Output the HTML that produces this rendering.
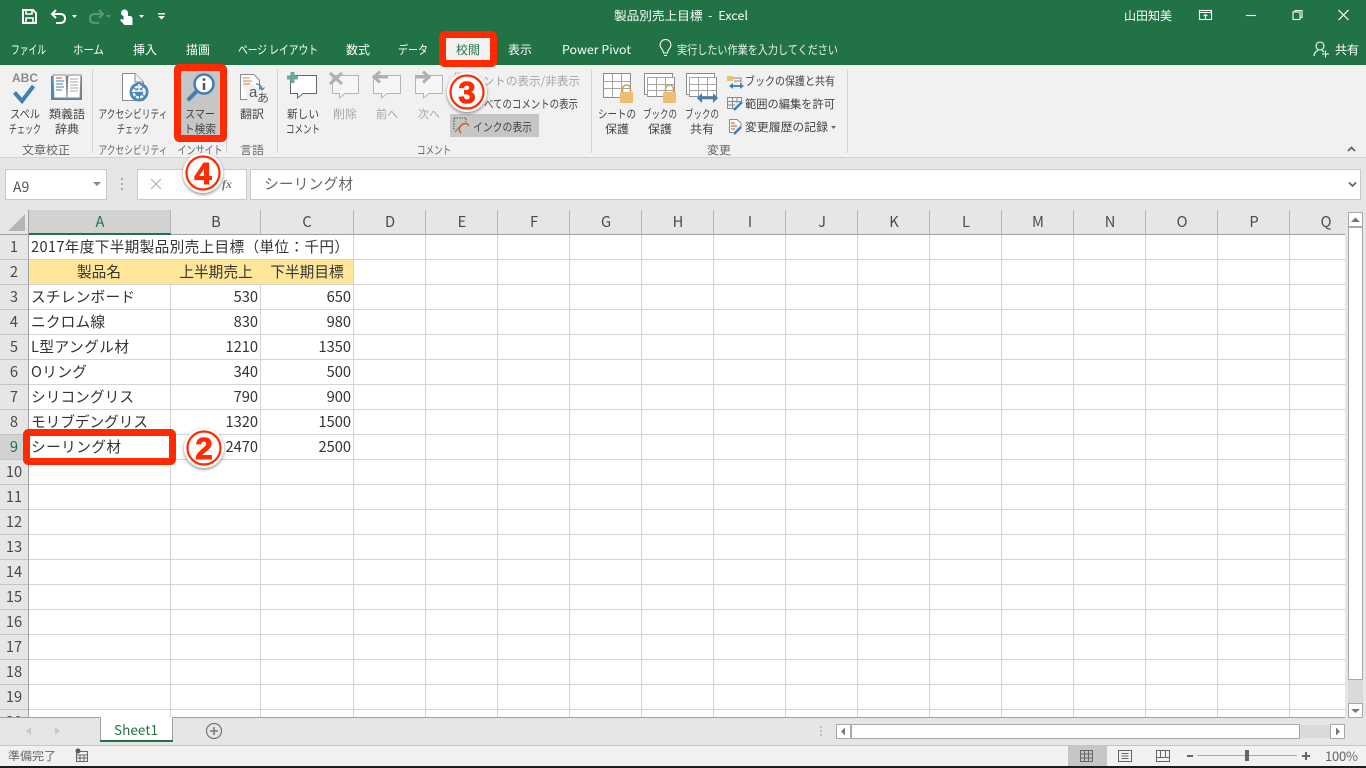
<!DOCTYPE html>
<html lang="ja">
<head>
<meta charset="utf-8">
<title>製品別売上目標 - Excel</title>
<style>
html,body{margin:0;padding:0;width:1366px;height:768px;overflow:hidden;background:#fff}
svg{display:block;position:absolute;left:0;top:0}
text{font-family:"Noto Sans CJK JP","Liberation Sans",sans-serif;white-space:pre}
.w{fill:#fff;font-size:12px}
.r{fill:#444;font-size:11.5px}
.d{fill:#a6a6a6;font-size:11.5px}
.g{fill:#666;font-size:11.5px}
.c{fill:#333;font-size:14.67px}
.h{fill:#4a4a4a;font-size:14.67px;text-anchor:middle}
.e{text-anchor:end}
.m{text-anchor:middle}
.n{font-family:"Liberation Sans",sans-serif;font-weight:bold;fill:#ff2a00;stroke:#ff2a00;stroke-width:1;font-size:31px;text-anchor:middle}
</style>
</head>
<body>
<svg width="1366" height="768" viewBox="0 0 1366 768" xmlns="http://www.w3.org/2000/svg">
<defs>
<filter id="sh" x="-30%" y="-30%" width="160%" height="160%"><feDropShadow dx="0" dy="1.5" stdDeviation="1.6" flood-color="#000" flood-opacity=".45"/></filter>
</defs>
<!-- backgrounds -->
<rect width="1366" height="768" fill="#e6e6e6"/>
<rect width="1366" height="65" fill="#217346"/>
<rect y="65" width="1366" height="92" fill="#f1f1f1"/>
<rect y="157" width="1366" height="1" fill="#d2d2d2"/>

<!-- title bar -->
<g fill="none" stroke="#fff" stroke-width="2">
<path d="M23 10H33L36 13V23H23Z"/><path d="M26 10V14H32V10M26 23V18H33V23" stroke-width="1.6"/>
<path d="M53 14H60Q65 14 65 18.500T60 23H56M56 10L52 14L56 18"/>
</g>
<path d="M72 15H77L74.500 18Z M139 15H144L141.500 18Z" fill="#fff"/>
<g fill="none" stroke="#5c9877" stroke-width="2"><path d="M102 14H95Q90 14 90 18.500T95 23H99M99 10L103 14L99 18"/></g>
<path d="M106 15H111L108.500 18Z" fill="#5c9877"/>
<path d="M121 13a3.500 3.500 0 0 1 7 0v3h2.500q2 .5 2 3v6h-8l-4.500 -5 1.500-1 2 1V16q-2.500-1-2.500-3z" fill="#fff"/>
<path d="M158 13H165V14.500H158ZM158 16H165L161.500 19.500Z" fill="#fff"/>
<text x="681" y="20" class="w m" textLength="134" lengthAdjust="spacingAndGlyphs">製品別売上目標  -  Excel</text>
<text x="1124" y="20" class="w" textLength="48" lengthAdjust="spacingAndGlyphs">山田知美</text>
<g fill="none" stroke="#fff" stroke-width="1.100">
<rect x="1199.500" y="10.500" width="12" height="9"/><path d="M1199 12.500H1212M1205.500 19V14.500M1203.500 16L1205.500 14.500L1207.500 16"/>
<path d="M1246 15.500H1256"/>
<rect x="1293" y="12" width="7" height="7.500"/><path d="M1295 12V10.500H1302V17.500H1300"/>
<path d="M1338.500 10L1348.500 20M1348.500 10L1338.500 20" stroke-width="1.200"/>
</g>

<!-- tabs -->
<text x="11" y="54" class="w" textLength="35" lengthAdjust="spacingAndGlyphs">ファイル</text>
<text x="73" y="54" class="w" textLength="31" lengthAdjust="spacingAndGlyphs">ホーム</text>
<text x="133" y="54" class="w">挿入</text>
<text x="186" y="54" class="w">描画</text>
<text x="238" y="54" class="w" textLength="80" lengthAdjust="spacingAndGlyphs">ページ レイアウト</text>
<text x="346" y="54" class="w">数式</text>
<text x="398" y="54" class="w" textLength="30" lengthAdjust="spacingAndGlyphs">データ</text>
<text x="508" y="54" class="w">表示</text>
<text x="562" y="54" class="w" textLength="69" lengthAdjust="spacingAndGlyphs">Power Pivot</text>
<g fill="none" stroke="#fff" stroke-width="1"><path d="M663.500 53Q663 50 661.500 48.500A5.400 5.400 0 1 1 669.500 48.500Q668 50 667.500 53ZM664 55.500H667"/></g>
<text x="677" y="54" class="w" fill-opacity=".9" textLength="161" lengthAdjust="spacingAndGlyphs">実行したい作業を入力してください</text>
<g fill="none" stroke="#fff" stroke-width="1.100"><circle cx="1320" cy="46" r="4"/><path d="M1314 56Q1314.500 51.500 1318 50.500M1322 50.500Q1323 51 1324 52M1322 54H1329M1325.500 50.500V57.500"/></g>
<text x="1335" y="54" class="w">共有</text>

<!-- review tab and red frame -->
<rect x="442.500" y="34.500" width="51" height="29" rx="2" fill="#f1f1f1" stroke="#ff2a00" stroke-width="7"/>
<text x="456" y="54" style="font-size:12px;fill:#217346">校閲</text>

<!-- ribbon separators -->
<path d="M92.500 69V153M226.500 69V153M277.500 69V153M591.500 69V153M847.500 69V153" stroke="#d4d4d4" fill="none"/>

<!-- proofing -->
<text x="25" y="82" style="font-family:'Liberation Sans',sans-serif;font-weight:bold;font-size:12px;fill:#8a8a8a" text-anchor="middle">ABC</text>
<path d="M14.500 92.500L22 101L33.500 86" fill="none" stroke="#3f7fb5" stroke-width="4"/>
<text x="25" y="118" class="r m" textLength="30" lengthAdjust="spacingAndGlyphs">スペル</text>
<text x="25" y="133" class="r m" textLength="32" lengthAdjust="spacingAndGlyphs">チェック</text>
<rect x="51" y="76" width="31" height="24" fill="#4f86b8"/>
<path d="M53 75H66L67 98H54ZM81 75H68L67 98H80Z" fill="#fff" stroke="#8a8a8a"/>
<path d="M56 78H62" stroke="#d0452d"/><path d="M56 81H64M56 84H63M56 87H64M56 90H62" stroke="#3f7fb5"/><path d="M70 79H78M70 82H78M70 85H78M70 88H78M70 91H78" stroke="#aaa"/>
<text x="67" y="118" class="r m" textLength="36" lengthAdjust="spacingAndGlyphs">類義語</text>
<text x="67" y="133" class="r m" textLength="24" lengthAdjust="spacingAndGlyphs">辞典</text>
<text x="46" y="154" class="g m" textLength="48" lengthAdjust="spacingAndGlyphs">文章校正</text>

<!-- accessibility -->
<path d="M122.500 73.500H135L143.500 82V100.500H122.500Z" fill="#fff" stroke="#8a8a8a"/><path d="M135 73.500V82H143.500" fill="#f1f1f1" stroke="#8a8a8a"/>
<circle cx="139" cy="92" r="9.500" fill="#4f86b8"/>
<circle cx="139" cy="92" r="5.500" fill="none" stroke="#fff" stroke-width="2.400" stroke-dasharray="3 1.300"/>
<path d="M139 84V91M132 91H146" stroke="#fff" stroke-width="1.500"/>
<text x="133" y="118" class="r m" textLength="69" lengthAdjust="spacingAndGlyphs">アクセシビリティ</text>
<text x="133" y="133" class="r m" textLength="32" lengthAdjust="spacingAndGlyphs">チェック</text>
<text x="133" y="154" class="g m" textLength="69" lengthAdjust="spacingAndGlyphs">アクセシビリティ</text>

<!-- smart lookup -->
<rect x="177.500" y="67.500" width="46" height="71" rx="2" fill="#c6c6c6" stroke="#ff2a00" stroke-width="7"/>
<path d="M189 99L199 89" stroke="#3f7fb5" stroke-width="4" stroke-linecap="round"/>
<circle cx="204" cy="84" r="9.500" fill="#fff" stroke="#3f7fb5" stroke-width="2.500"/>
<path d="M204 83V90" stroke="#555" stroke-width="2.400"/><circle cx="204" cy="79.500" r="1.400" fill="#555"/>
<text x="200" y="118" class="r m" textLength="30" lengthAdjust="spacingAndGlyphs">スマー</text>
<text x="200" y="133" class="r m" textLength="32" lengthAdjust="spacingAndGlyphs">ト検索</text>
<text x="200" y="154" class="g m" textLength="45" lengthAdjust="spacingAndGlyphs">インサイト</text>

<!-- translate -->
<path d="M240.500 74.500H254L259.500 80V90M240.500 74.500V99.500H247" fill="#fff" stroke="#8a8a8a"/>
<path d="M243 78H250M243 81H252M243 84H250" stroke="#e08a3c"/>
<path d="M256 84Q261 84 262 89M260 87.500L262 90L264.500 87.500" fill="none" stroke="#3f7fb5" stroke-width="1.200"/>
<text x="249" y="97" style="font-size:15px;fill:#555;font-family:'Liberation Sans',sans-serif">a</text>
<text x="257" y="102" style="font-size:12px;fill:#555">あ</text>
<text x="252" y="118" class="r m" textLength="24" lengthAdjust="spacingAndGlyphs">翻訳</text>
<text x="252" y="154" class="g m" textLength="24" lengthAdjust="spacingAndGlyphs">言語</text>

<!-- comments -->
<path d="M290.500 75.500H316.500V93.500H303L297.500 98V93.500H290.500Z" fill="#fff" stroke="#666"/>
<path d="M292.500 72V83M287 77.500H298" stroke="#6fa897" stroke-width="4"/>
<text x="303" y="118" class="r m" textLength="32" lengthAdjust="spacingAndGlyphs">新しい</text>
<text x="303" y="133" class="r m" textLength="34" lengthAdjust="spacingAndGlyphs">コメント</text>
<g fill="#f6f6f6" stroke="#b5b5b5">
<path d="M332.500 75.500H358.500V93.500H345L339.500 98V93.500H332.500Z"/>
<path d="M373.500 75.500H400.500V93.500H387L381.500 98V93.500H373.500Z"/>
<path d="M415.500 75.500H442.500V93.500H429L423.500 98V93.500H415.500Z"/>
</g>
<path d="M330 73L342 84M342 73L330 84" stroke="#b0b0b0" stroke-width="3"/>
<path d="M388 77H375M380 71.500L374 77L380 82.500" fill="none" stroke="#b0b0b0" stroke-width="3"/>
<path d="M415 77H428M423 71.500L429 77L423 82.500" fill="none" stroke="#b0b0b0" stroke-width="3"/>
<text x="345" y="118" class="d m" textLength="24" lengthAdjust="spacingAndGlyphs">削除</text>
<text x="387" y="118" class="d m" textLength="22" lengthAdjust="spacingAndGlyphs">前へ</text>
<text x="429" y="118" class="d m" textLength="22" lengthAdjust="spacingAndGlyphs">次へ</text>
<rect x="455" y="73" width="12" height="9" fill="none" stroke="#aaa" stroke-dasharray="1.500 1"/>
<text x="471" y="85" class="d" textLength="109" lengthAdjust="spacingAndGlyphs">メントの表示/非表示</text>
<text x="484" y="108" class="r" textLength="94" lengthAdjust="spacingAndGlyphs">べてのコメントの表示</text>
<rect x="450" y="114" width="89" height="23" fill="#c6c6c6"/>
<path d="M454 118H466V122M454 118V130" fill="none" stroke="#555" stroke-dasharray="1.500 1"/>
<path d="M455 132L462 124" stroke="#777"/>
<path d="M461 133Q457 129 462 124.500Q467 122 469 126" fill="none" stroke="#d8552b" stroke-width="1.400"/>
<text x="473" y="131" class="r" textLength="59" lengthAdjust="spacingAndGlyphs">インクの表示</text>
<text x="434" y="154" class="g m" textLength="34" lengthAdjust="spacingAndGlyphs">コメント</text>

<!-- protect group -->
<g fill="#fff" stroke="#8c8c8c">
<path d="M603.500 73.500H630.500V97.500H603.500Z"/>
<path d="M644.500 73.500H672.500V77.500H674.500V96.500H647.500V94.500H644.500Z"/>
<path d="M686.500 73.500H714.500V77.500H716.500V96.500H689.500V94.500H686.500Z"/>
</g>
<path d="M603.500 81.500H630.500M603.500 88.500H630.500M612.500 73.500V97.500M621.500 73.500V97.500M647.500 77.500H674.500M647.500 84.500H674.500M647.500 90.500H674.500M647.500 77.500V96.500M656.500 77.500V96.500M665.500 77.500V96.500M689.500 77.500H716.500M689.500 84.500H716.500M689.500 90.500H716.500M689.500 77.500V96.500M698.500 77.500V96.500M707.500 77.500V96.500" stroke="#a5a5a5" fill="none"/>
<g fill="#edbe72"><rect x="620" y="92" width="13" height="11" rx="1"/><rect x="663" y="92" width="13" height="11" rx="1"/></g>
<path d="M622.500 92V89a4 4 0 0 1 8 0V92M665.500 92V89a4 4 0 0 1 8 0V92" fill="none" stroke="#c9a262" stroke-width="1.600"/>
<path d="M698 98H717" stroke="#3f7fb5" stroke-width="2.500"/><path d="M702 93L697 98L702 103ZM713 93L718 98L713 103Z" fill="#3f7fb5"/>
<text x="617" y="118" class="r m" textLength="38" lengthAdjust="spacingAndGlyphs">シートの</text>
<text x="617" y="133" class="r m" textLength="24" lengthAdjust="spacingAndGlyphs">保護</text>
<text x="660" y="118" class="r m" textLength="34" lengthAdjust="spacingAndGlyphs">ブックの</text>
<text x="660" y="133" class="r m" textLength="24" lengthAdjust="spacingAndGlyphs">保護</text>
<text x="702" y="118" class="r m" textLength="34" lengthAdjust="spacingAndGlyphs">ブックの</text>
<text x="702" y="133" class="r m" textLength="24" lengthAdjust="spacingAndGlyphs">共有</text>
<rect x="727" y="76" width="6" height="5" fill="#edbe72"/><path d="M733 78H741V85M734 81H741" stroke="#8c8c8c" fill="none"/>
<path d="M731 86H742" stroke="#3f7fb5" stroke-width="1.800"/><path d="M733 83L729 86L733 89ZM740 83L744 86L740 89Z" fill="#3f7fb5"/>
<text x="745" y="85" class="r" textLength="90" lengthAdjust="spacingAndGlyphs">ブックの保護と共有</text>
<path d="M727.500 97.500H741.500V104M727.500 97.500V108.500H734M727.500 101.500H741M727.500 105H735M732.500 97.500V108M737 97.500V103" stroke="#8c8c8c" fill="none"/>
<path d="M734 110L742 102" stroke="#3f7fb5" stroke-width="2.500"/>
<text x="745" y="108" class="r" textLength="90" lengthAdjust="spacingAndGlyphs">範囲の編集を許可</text>
<path d="M729.500 119.500H737L741 123V127M729.500 119.500V132.500H733" fill="#fff" stroke="#8c8c8c"/>
<path d="M731 123H735M731 126H737M731 129H735" stroke="#d8552b"/>
<path d="M734 134L741 127" stroke="#3f7fb5" stroke-width="2.500"/>
<text x="745" y="131" class="r" textLength="83" lengthAdjust="spacingAndGlyphs">変更履歴の記録</text>
<path d="M831 126H836L833.500 129Z" fill="#666"/>
<text x="719" y="154" class="g m" textLength="24" lengthAdjust="spacingAndGlyphs">変更</text>
<path d="M1348 151L1351.500 147.500L1355 151" fill="none" stroke="#666" stroke-width="1.800"/>

<!-- formula bar -->
<rect x="5.500" y="169.500" width="101" height="30" fill="#fff" stroke="#c8c8c8"/>
<text x="13" y="192" style="font-size:14px;fill:#555">A9</text>
<path d="M93 182H101L97 186Z" fill="#888"/>
<path d="M122 178V180M122 183V185M122 188V190" stroke="#aaa" stroke-width="2"/>
<rect x="137.500" y="169.500" width="109" height="30" fill="#fff" stroke="#c8c8c8"/>
<path d="M151 179L161 189M161 179L151 189" stroke="#bdbdbd" stroke-width="1.400"/>
<text x="222" y="188" style="font-family:'Liberation Serif',serif;font-style:italic;font-weight:bold;font-size:12px;fill:#777">fx</text>
<rect x="250.500" y="169.500" width="1110" height="30" fill="#fff" stroke="#c8c8c8"/>
<text x="264" y="189" style="font-size:14.670px;fill:#666" textLength="89" lengthAdjust="spacing">シーリング材</text>
<path d="M1349 182.500L1352.500 186L1356 182.500" fill="none" stroke="#666" stroke-width="1.800"/>

<!-- grid -->
<rect x="29" y="235" width="1316" height="482" fill="#fff"/>
<path d="M353.500 235V717M425.500 235V717M497.500 235V717M569.500 235V717M641.500 235V717M713.500 235V717M785.500 235V717M857.500 235V717M929.500 235V717M1001.500 235V717M1073.500 235V717M1145.500 235V717M1217.500 235V717M1289.500 235V717M170.500 285V717M260.500 285V717" stroke="#d4d4d4" fill="none"/>
<path d="M29 259.500H1345M29 284.500H1345M29 309.500H1345M29 334.500H1345M29 359.500H1345M29 384.500H1345M29 409.500H1345M29 434.500H1345M29 459.500H1345M29 484.500H1345M29 509.500H1345M29 534.500H1345M29 559.500H1345M29 584.500H1345M29 609.500H1345M29 634.500H1345M29 659.500H1345M29 684.500H1345M29 709.500H1345" stroke="#d4d4d4" fill="none"/>
<rect x="29" y="260" width="324" height="24" fill="#ffe699"/>
<!-- headers -->
<rect x="0" y="210" width="1345" height="24" fill="#e6e6e6"/>
<rect x="29" y="210" width="141" height="24" fill="#d2d2d2"/>
<rect x="0" y="434" width="28" height="25" fill="#d2d2d2"/>
<path d="M8 231L25 231L25 214Z" fill="#b5b5b5"/>
<path d="M0 234.500H1345" stroke="#a0a0a0"/>
<path d="M28.500 210V717" stroke="#a0a0a0"/>
<path d="M170.500 210V234M260.500 210V234M353.500 210V234M425.500 210V234M497.500 210V234M569.500 210V234M641.500 210V234M713.500 210V234M785.500 210V234M857.500 210V234M929.500 210V234M1001.500 210V234M1073.500 210V234M1145.500 210V234M1217.500 210V234M1289.500 210V234" stroke="#b4b4b4"/>
<path d="M0 259.500H28M0 284.500H28M0 309.500H28M0 334.500H28M0 359.500H28M0 384.500H28M0 409.500H28M0 434.500H28M0 459.500H28M0 484.500H28M0 509.500H28M0 534.500H28M0 559.500H28M0 584.500H28M0 609.500H28M0 634.500H28M0 659.500H28M0 684.500H28M0 709.500H28" stroke="#c4c4c4"/>
<rect x="29" y="233" width="142" height="2" fill="#217346"/>
<text x="100" y="227" class="h" style="fill:#217346">A</text>
<text x="216" y="227" class="h">B</text>
<text x="307" y="227" class="h">C</text>
<text x="390" y="227" class="h">D</text>
<text x="462" y="227" class="h">E</text>
<text x="534" y="227" class="h">F</text>
<text x="606" y="227" class="h">G</text>
<text x="678" y="227" class="h">H</text>
<text x="750" y="227" class="h">I</text>
<text x="822" y="227" class="h">J</text>
<text x="894" y="227" class="h">K</text>
<text x="966" y="227" class="h">L</text>
<text x="1038" y="227" class="h">M</text>
<text x="1110" y="227" class="h">N</text>
<text x="1182" y="227" class="h">O</text>
<text x="1254" y="227" class="h">P</text>
<text x="1326" y="227" class="h">Q</text>
<text x="14" y="252" class="h">1</text>
<text x="14" y="277" class="h">2</text>
<text x="14" y="302" class="h">3</text>
<text x="14" y="327" class="h">4</text>
<text x="14" y="352" class="h">5</text>
<text x="14" y="377" class="h">6</text>
<text x="14" y="402" class="h">7</text>
<text x="14" y="427" class="h">8</text>
<text x="14" y="452" class="h" style="fill:#217346">9</text>
<text x="14" y="477" class="h">10</text>
<text x="14" y="502" class="h">11</text>
<text x="14" y="527" class="h">12</text>
<text x="14" y="552" class="h">13</text>
<text x="14" y="577" class="h">14</text>
<text x="14" y="602" class="h">15</text>
<text x="14" y="627" class="h">16</text>
<text x="14" y="652" class="h">17</text>
<text x="14" y="677" class="h">18</text>
<text x="14" y="702" class="h">19</text>
<text x="14" y="727" class="h">20</text>
<!-- cells -->
<text x="31" y="252" class="c" textLength="318" lengthAdjust="spacing">2017年度下半期製品別売上目標（単位：千円）</text>
<text x="99" y="277" class="c m">製品名</text>
<text x="216" y="277" class="c m">上半期売上</text>
<text x="307" y="277" class="c m">下半期目標</text>
<text x="31" y="302" class="c" textLength="104" lengthAdjust="spacing">スチレンボード</text>
<text x="31" y="327" class="c" textLength="74" lengthAdjust="spacing">ニクロム線</text>
<text x="31" y="352" class="c" textLength="98" lengthAdjust="spacing">L型アングル材</text>
<text x="31" y="377" class="c" textLength="56" lengthAdjust="spacing">Oリング</text>
<text x="31" y="402" class="c" textLength="103" lengthAdjust="spacing">シリコングリス</text>
<text x="31" y="427" class="c" textLength="117" lengthAdjust="spacing">モリブデングリス</text>
<text x="258" y="302" class="c e">530</text><text x="351" y="302" class="c e">650</text>
<text x="258" y="327" class="c e">830</text><text x="351" y="327" class="c e">980</text>
<text x="258" y="352" class="c e">1210</text><text x="351" y="352" class="c e">1350</text>
<text x="258" y="377" class="c e">340</text><text x="351" y="377" class="c e">500</text>
<text x="258" y="402" class="c e">790</text><text x="351" y="402" class="c e">900</text>
<text x="258" y="427" class="c e">1320</text><text x="351" y="427" class="c e">1500</text>
<text x="258" y="452" class="c e">2470</text><text x="351" y="452" class="c e">2500</text>

<!-- selected cell red frame -->
<rect x="26.500" y="432.500" width="146" height="29" rx="2" fill="#fff" stroke="#ff2a00" stroke-width="7"/>
<text x="31" y="452" class="c" textLength="90" lengthAdjust="spacing">シーリング材</text>

<!-- vertical scrollbar -->
<rect x="1345" y="210" width="21" height="535" fill="#e6e6e6"/>
<rect x="1348.500" y="212.500" width="14" height="14" fill="#fff" stroke="#a8a8a8"/>
<path d="M1351 222H1360L1355.500 217.500Z" fill="#777"/>
<rect x="1348.500" y="227.500" width="14" height="452" fill="#fff" stroke="#a8a8a8"/>
<rect x="1348" y="680" width="15" height="23" fill="#dadada"/>
<rect x="1348.500" y="703.500" width="14" height="14" fill="#fff" stroke="#a8a8a8"/>
<path d="M1351 709H1360L1355.500 713Z" fill="#777"/>
<path d="M29 717.500H1345" stroke="#a0a0a0"/>

<!-- sheet tabs -->
<rect x="0" y="718" width="1366" height="27" fill="#e6e6e6"/>
<path d="M0 717.500H100M173 717.500H1345" stroke="#a0a0a0"/>
<path d="M31 727V735L26 731ZM55 727V735L60 731Z" fill="#c8c8c8"/>
<rect x="100.500" y="717" width="72" height="24" fill="#fff"/>
<path d="M100.500 717V741M172.500 717V741" stroke="#a0a0a0"/>
<rect x="100" y="740" width="73" height="2" fill="#217346"/>
<text x="136" y="735" class="m" style="font-size:13.500px;fill:#217346" textLength="44" lengthAdjust="spacing">Sheet1</text>
<circle cx="214" cy="731" r="7.500" fill="none" stroke="#777" stroke-width="1.200"/>
<path d="M214 727V735M210 731H218" stroke="#777" stroke-width="1.500"/>
<path d="M821 726V728M821 730V732M821 734V736" stroke="#999"/>
<!-- horizontal scrollbar -->
<rect x="836.500" y="724.500" width="14" height="14" fill="#fff" stroke="#a8a8a8"/>
<path d="M845 727.500V735.500L841 731.500Z" fill="#777"/>
<rect x="851.500" y="724.500" width="448" height="14" fill="#fff" stroke="#a8a8a8"/>
<rect x="1300" y="725" width="31" height="13" fill="#dadada"/>
<rect x="1330.500" y="724.500" width="14" height="14" fill="#fff" stroke="#a8a8a8"/>
<path d="M1336 727.500V735.500L1340 731.500Z" fill="#777"/>

<!-- status bar -->
<rect y="745" width="1366" height="21" fill="#f1f1f1"/>
<path d="M0 745.500H1366" stroke="#c6c6c6"/>
<text x="8" y="760" class="g" textLength="48" lengthAdjust="spacingAndGlyphs">準備完了</text>
<circle cx="78" cy="751" r="2.500" fill="#555"/>
<path d="M76 751.500H87.500V761.500H76.500V751.500M77 755H87M77 758H87M80 755V761M84 755V761" stroke="#666" fill="none"/>
<rect x="1068" y="746" width="39" height="20" fill="#c6c6c6"/>
<path d="M1080.500 750.500H1092.500V761.500H1080.500ZM1080.500 754H1092.500M1080.500 758H1092.500M1084.500 750.500V761.500M1088.500 750.500V761.500" stroke="#666" fill="none"/>
<path d="M1118.500 750.500H1131.500V761.500H1118.500ZM1121.500 753.500H1128.500M1121.500 756H1128.500M1121.500 758.500H1128.500" stroke="#666" fill="none"/>
<path d="M1156.500 750.500H1169.500V761.500H1156.500ZM1156.500 757.500H1169.500M1160.500 750.500V757M1165.500 750.500V757" stroke="#666" fill="none"/>
<path d="M1187 756H1193M1302 756H1310M1306 752V760" stroke="#666" stroke-width="2"/>
<path d="M1197 755.500H1297" stroke="#a8a8a8"/>
<rect x="1245" y="750" width="4" height="11" fill="#666"/>
<text x="1325" y="761" class="g" style="font-size:13px" textLength="33" lengthAdjust="spacing">100%</text>
<rect y="766" width="1366" height="2" fill="#1c1c1c"/>

<!-- circled numbers -->
<g filter="url(#sh)"><circle cx="467" cy="92" r="20" fill="#fff"/></g>
<circle cx="467" cy="92" r="16.500" fill="#fff" stroke="#ff2a00" stroke-width="2.200"/>
<text x="467" y="103" class="n">3</text>
<g filter="url(#sh)"><circle cx="204" cy="448" r="20" fill="#fff"/></g>
<circle cx="204" cy="448" r="16.500" fill="#fff" stroke="#ff2a00" stroke-width="2.200"/>
<text x="204" y="459" class="n">2</text>
<g filter="url(#sh)"><circle cx="203" cy="173" r="20" fill="#fff"/></g>
<circle cx="203" cy="173" r="16.500" fill="#fff" stroke="#ff2a00" stroke-width="2.200"/>
<text x="203" y="184" class="n">4</text>
</svg>
</body>
</html>
